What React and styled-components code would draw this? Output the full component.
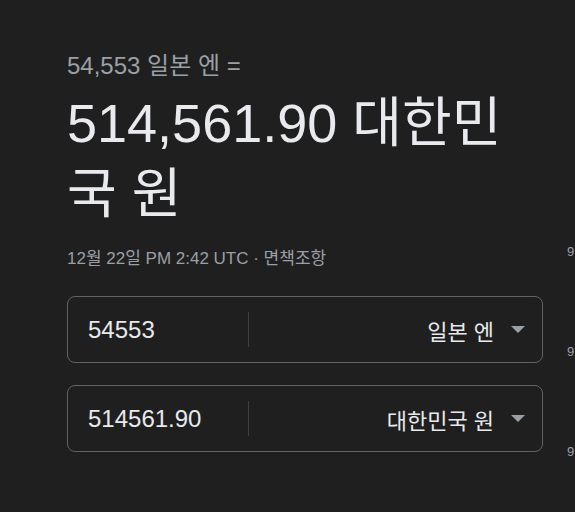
import React from 'react';
import styled, { createGlobalStyle } from 'styled-components';

const colors = {
  bg: '#1f1f1f',
  text: '#e8eaed',
  sub: '#9aa0a6',
  border: '#5f6368',
  divider: '#3c4043',
};

const font = '"Liberation Sans", Arial, "Noto Sans CJK KR", sans-serif';

const GlobalStyle = createGlobalStyle`
  html, body {
    margin: 0;
    background: ${colors.bg};
    overflow: hidden;
  }
  body {
    font-family: ${font};
    color: ${colors.text};
  }
`;

const Page = styled.div`
  display: flex;
  padding: 52px 0 0 67px;
  width: 575px;
  height: 512px;
  box-sizing: border-box;
`;

const Converter = styled.div`
  width: 476px;
  flex-shrink: 0;
`;

const FromLine = styled.div`
  color: ${colors.sub};
  font-size: 24px;
  line-height: 28px;
`;

const Result = styled.div`
  margin-top: 8px;
  font-size: 54px;
  line-height: 71px;
  color: ${colors.text};
`;

const Meta = styled.div`
  margin-top: 19px;
  font-size: 17px;
  line-height: 20px;
  color: ${colors.sub};
`;

const Fields = styled.div`
  margin-top: 27px;
  display: flex;
  flex-direction: column;
  gap: 22px;
`;

const Field = styled.div`
  height: 67px;
  box-sizing: border-box;
  border: 1px solid ${colors.border};
  border-radius: 8px;
  display: flex;
  align-items: center;
`;

const Amount = styled.div`
  width: 160px;
  padding-left: 20px;
  font-size: 24px;
  color: ${colors.text};
  flex-shrink: 0;
`;

const Divider = styled.div`
  width: 1px;
  height: 35px;
  background: ${colors.divider};
`;

const Currency = styled.div`
  flex: 1;
  display: flex;
  align-items: center;
  justify-content: flex-end;
  gap: 17px;
  padding-right: 17px;
  font-size: 22px;
  color: ${colors.text};
`;

const Caret = styled.span`
  width: 0;
  height: 0;
  border-left: 7px solid transparent;
  border-right: 7px solid transparent;
  border-top: 7px solid ${colors.sub};
`;

const Axis = styled.div`
  margin-left: 24px;
  padding-top: 192px;
  display: flex;
  flex-direction: column;
  gap: 84px;
`;

const AxisLabel = styled.span`
  font-size: 13px;
  line-height: 16px;
  color: ${colors.sub};
  white-space: nowrap;
`;

const rows = [
  { amount: '54553', currency: '일본 엔' },
  { amount: '514561.90', currency: '대한민국 원' },
];

export default function App() {
  return (
    <>
      <GlobalStyle />
      <Page>
        <Converter>
          <FromLine>54,553 일본 엔 =</FromLine>
          <Result>514,561.90 대한민국 원</Result>
          <Meta>12월 22일 PM 2:42 UTC · 면책조항</Meta>
          <Fields>
            {rows.map((r) => (
              <Field key={r.currency}>
                <Amount>{r.amount}</Amount>
                <Divider />
                <Currency>
                  {r.currency}
                  <Caret />
                </Currency>
              </Field>
            ))}
          </Fields>
        </Converter>
        <Axis>
          <AxisLabel>9.45</AxisLabel>
          <AxisLabel>9.40</AxisLabel>
          <AxisLabel>9.35</AxisLabel>
        </Axis>
      </Page>
    </>
  );
}
